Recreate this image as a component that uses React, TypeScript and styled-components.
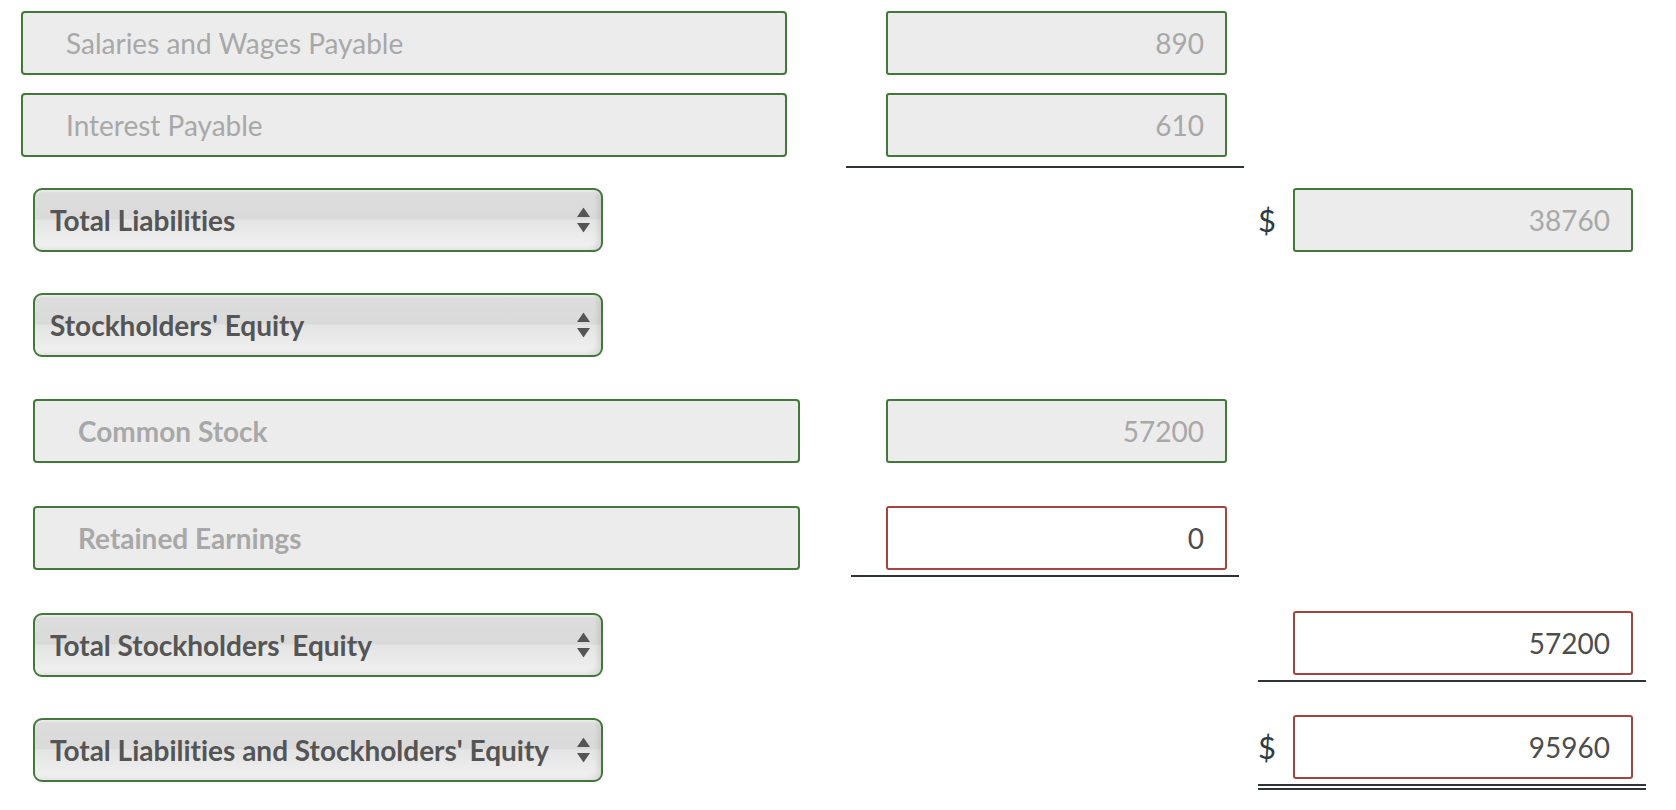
import styled, { createGlobalStyle } from "styled-components";

const GlobalStyle = createGlobalStyle`
  body {
    margin: 0;
    background: #ffffff;
    font-family: Lato, "Open Sans", sans-serif;
    font-variant-ligatures: none;
  }
`;

const green = "#43783b";
const red = "#a3443f";
const rule = "#2d3338";

const Sheet = styled.div`
  display: flex;
  flex-direction: column;
  width: 1676px;
  padding-top: 11px;
`;

const Row = styled.div<{ $space: number }>`
  display: grid;
  grid-template-columns: 846px 412px 388px;
  align-items: start;
  margin-top: ${({ $space }) => $space}px;
`;

const LabelBox = styled.div<{ $indent: number; $width: number; $bold?: boolean }>`
  box-sizing: border-box;
  margin-left: ${({ $indent }) => $indent}px;
  width: ${({ $width }) => $width}px;
  height: 64px;
  display: flex;
  align-items: center;
  padding-left: 43px;
  background: #ececec;
  border: 2px solid ${green};
  border-radius: 4px;
  color: #a8a8a8;
  font-size: 28px;
  font-weight: ${({ $bold }) => ($bold ? 700 : 400)};
`;

const SelectWrap = styled.div<{ $drop?: number }>`
  position: relative;
  margin-left: 33px;
  margin-top: ${({ $drop }) => $drop ?? 0}px;
  width: 570px;
  height: 64px;
`;

const Select = styled.select`
  appearance: none;
  box-sizing: border-box;
  width: 100%;
  height: 100%;
  padding: 0 40px 0 15px;
  border: 2px solid ${green};
  border-radius: 9px;
  background: linear-gradient(
    to bottom,
    #dddddd 0%,
    #dadada 48%,
    #e4e4e4 50%,
    #e9e9e9 70%,
    #f2f2f2 100%
  );
  box-shadow: inset -6px -4px 6px -4px rgba(0, 0, 0, 0.12),
    inset 0 2px 2px rgba(255, 255, 255, 0.4);
  color: #555555;
  font-family: Lato, "Open Sans", sans-serif;
  font-variant-ligatures: none;
  font-size: 28px;
  font-weight: 700;
  outline: none;
`;

const Arrows = styled.svg`
  position: absolute;
  right: 13px;
  top: 50%;
  transform: translateY(-50%);
  pointer-events: none;
`;

const AmountCell = styled.div<{ $pad?: number; $trim?: boolean }>`
  box-sizing: border-box;
  width: ${({ $trim }) => ($trim ? 388 : 398)}px;
  margin-left: ${({ $trim }) => ($trim ? 5 : 0)}px;
  padding-left: ${({ $trim }) => ($trim ? 35 : 40)}px;
  padding-bottom: ${({ $pad }) => $pad ?? 0}px;
  border-bottom: ${({ $pad }) => ($pad ? `2px solid ${rule}` : "none")};
`;

const TotalCell = styled.div<{ $line?: "single" | "double" }>`
  display: flex;
  align-items: center;
  padding-bottom: ${({ $line }) => ($line ? 5 : 0)}px;
  border-bottom: ${({ $line }) =>
    $line === "double" ? `6px double ${rule}` : $line === "single" ? `2px solid ${rule}` : "none"};
`;

const Dollar = styled.span`
  width: 35px;
  color: #2d3b45;
  font-size: 31px;
  line-height: 1;
`;

const Amount = styled.input<{ $error?: boolean; $width: number }>`
  box-sizing: border-box;
  width: ${({ $width }) => $width}px;
  height: 64px;
  margin: 0;
  padding: 0 21px 0 10px;
  text-align: right;
  border: 2px solid ${({ $error }) => ($error ? red : green)};
  border-radius: 3px;
  background: ${({ $error }) => ($error ? "#ffffff" : "#ececec")};
  color: ${({ $error }) => ($error ? "#4d4d4d" : "#a8a8a8")};
  -webkit-text-fill-color: ${({ $error }) => ($error ? "#4d4d4d" : "#a8a8a8")};
  font-family: Lato, "Open Sans", sans-serif;
  font-size: 28px;
  outline: none;
`;

const TotalAmount = styled(Amount)`
  margin-right: 13px;
`;

const Heading = ({ label, drop }: { label: string; drop?: number }) => (
  <SelectWrap $drop={drop}>
    <Select defaultValue={label}>
      <option>{label}</option>
    </Select>
    <Arrows width="13" height="25" viewBox="0 0 13 25">
      <polygon points="0,9.5 6.5,0 13,9.5" fill="#555" />
      <polygon points="0,15.5 13,15.5 6.5,25" fill="#555" />
    </Arrows>
  </SelectWrap>
);

const App = () => {
  return (
    <>
      <GlobalStyle />
      <Sheet>
        <Row $space={0}>
          <LabelBox $indent={21} $width={766}>
            Salaries and Wages Payable
          </LabelBox>
          <AmountCell>
            <Amount $width={341} value="890" readOnly disabled />
          </AmountCell>
        </Row>

        <Row $space={18}>
          <LabelBox $indent={21} $width={766}>
            Interest Payable
          </LabelBox>
          <AmountCell $pad={9}>
            <Amount $width={341} value="610" readOnly disabled />
          </AmountCell>
        </Row>

        <Row $space={20}>
          <Heading label="Total Liabilities" />
          <div />
          <TotalCell>
            <Dollar>$</Dollar>
            <TotalAmount $width={340} value="38760" readOnly disabled />
          </TotalCell>
        </Row>

        <Row $space={41}>
          <Heading label="Stockholders' Equity" />
        </Row>

        <Row $space={42}>
          <LabelBox $indent={33} $width={767} $bold>
            Common Stock
          </LabelBox>
          <AmountCell>
            <Amount $width={341} value="57200" readOnly disabled />
          </AmountCell>
        </Row>

        <Row $space={43}>
          <LabelBox $indent={33} $width={767} $bold>
            Retained Earnings
          </LabelBox>
          <AmountCell $pad={5} $trim>
            <Amount $width={341} $error value="0" readOnly />
          </AmountCell>
        </Row>

        <Row $space={34}>
          <Heading label="Total Stockholders' Equity" drop={2} />
          <div />
          <TotalCell $line="single">
            <Dollar />
            <TotalAmount $width={340} $error value="57200" readOnly />
          </TotalCell>
        </Row>

        <Row $space={33}>
          <Heading label="Total Liabilities and Stockholders' Equity" drop={3} />
          <div />
          <TotalCell $line="double">
            <Dollar>$</Dollar>
            <TotalAmount $width={340} $error value="95960" readOnly />
          </TotalCell>
        </Row>
      </Sheet>
    </>
  );
};

export default App;
